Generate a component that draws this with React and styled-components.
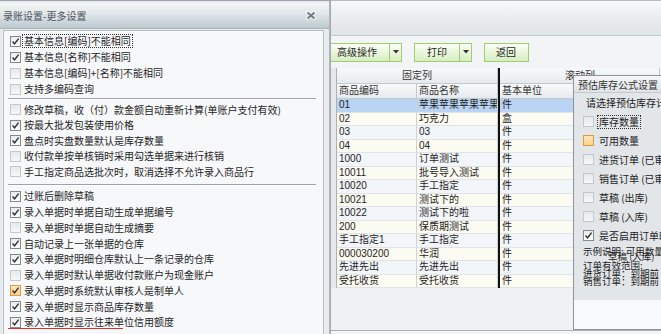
import styled, { createGlobalStyle } from "styled-components";

const GlobalStyle = createGlobalStyle`
  html, body { margin: 0; padding: 0; }
  body {
    font-family: "Liberation Sans", "Noto Sans CJK SC", sans-serif;
    font-size: 10px;
    color: #222;
    background: #dfe3e6;
  }
`;

const Desktop = styled.div`
  position: relative;
  width: 661px;
  height: 334px;
  overflow: hidden;
  display: flex;
  background: #dfe3e6;
`;

/* ---------- left dialog ---------- */

const SettingsDialog = styled.div`
  width: 330px;
  flex: none;
  box-sizing: border-box;
  display: flex;
  flex-direction: column;
  background: #e8ecee;
  border-top: 1px solid #9ba4aa;
  border-right: 1px solid #b0b7bc;
`;

const TitleBar = styled.div`
  height: 25px;
  margin-top: 2px;
  flex: none;
  display: flex;
  align-items: center;
  justify-content: space-between;
  padding: 0 13px 0 3px;
  background: linear-gradient(#f4f6f7, #e2e8eb 40%, #bccad0);
  border-bottom: 1px solid #a9b6bc;
  color: #50565a;
  font-family: "Noto Sans CJK SC", sans-serif;
`;

const Panel = styled.div`
  flex: 1;
  margin: 1px 5px 0 3px;
  padding-top: 2px;
  background: #f7f8fa;
  border: 1px solid #b7bfc5;
  border-bottom: none;
`;

const Group = styled.div`
  display: flex;
  flex-direction: column;
`;

const Row = styled.div`
  position: relative;
  height: ${(p) => p.$h}px;
  display: flex;
  align-items: center;
  gap: 2px;
  padding-left: 6px;
  white-space: nowrap;
  font-family: "Noto Sans CJK SC", sans-serif;
  color: #1e1e1e;
`;

const Label = styled.span`
  line-height: 12px;
  padding: 0 1px;
  outline: ${(p) => (p.$focus ? "1px dotted #333" : "none")};
`;

const Separator = styled.div`
  height: 0;
  margin: ${(p) => p.$m};
  margin-left: 4px;
  margin-right: 7px;
  border-top: 1px solid #9ea3a7;
  border-bottom: 1px solid #ffffff;
`;

const RedMark = styled.span`
  position: absolute;
  left: 4px;
  width: 115px;
  bottom: 1px;
  height: 1px;
  background: #e0302e;
`;

const BoxShell = styled.span`
  width: 11px;
  height: 11px;
  flex: none;
  box-sizing: border-box;
  display: inline-flex;
  align-items: center;
  justify-content: center;
  border: 1px solid ${(p) => (p.$hot ? "#e39a3c" : p.$checked ? "#808a91" : "#c3c8cc")};
  background: ${(p) =>
    p.$hot
      ? "linear-gradient(#fde7bd, #f9d08c)"
      : p.$checked
      ? "linear-gradient(#e9ecee, #ffffff)"
      : "linear-gradient(#e6e8ea, #f6f7f8)"};
`;

function CheckBox({ checked, hot }) {
  return (
    <BoxShell $checked={checked} $hot={hot}>
      {checked && (
        <svg width="9" height="9" viewBox="0 0 9 9">
          <path d="M1.5 4.5 L3.6 6.8 L7.6 1.6" fill="none" stroke="#333" strokeWidth="1.4" />
        </svg>
      )}
    </BoxShell>
  );
}

function CloseIcon() {
  return (
    <svg width="10" height="9" viewBox="0 0 10 9">
      <path d="M1.5 1.5 L8.5 7.5 M8.5 1.5 L1.5 7.5" stroke="#f4f6f7" strokeWidth="3.4" strokeLinecap="round" />
      <path d="M1.5 1.5 L8.5 7.5 M8.5 1.5 L1.5 7.5" stroke="#6f7a80" strokeWidth="1.8" />
    </svg>
  );
}

const groups = [
  {
    h: 16,
    sep: "1px 0 2px",
    items: [
      ["基本信息[编码]不能相同", true, false, true],
      ["基本信息[名称]不能相同", true],
      ["基本信息[编码]+[名称]不能相同", false],
      ["支持多编码查询", false],
    ],
  },
  {
    h: 15.5,
    sep: "4px 0 3px",
    items: [
      ["修改草稿，收（付）款金额自动重新计算(单账户支付有效)", false],
      ["按最大批发包装使用价格", true],
      ["盘点时实盘数量默认是库存数量", true],
      ["收付款单按单核销时采用勾选单据来进行核销", false],
      ["手工指定商品选批次时，取消选择不允许录入商品行", false],
    ],
  },
  {
    h: 15.75,
    items: [
      ["过账后删除草稿", true],
      ["录入单据时单据自动生成单据编号", true],
      ["录入单据时单据自动生成摘要", false],
      ["自动记录上一张单据的仓库", true],
      ["录入单据时明细仓库默认上一条记录的仓库", true],
      ["录入单据时默认单据收付款账户为现金账户", false],
      ["录入单据时系统默认审核人是制单人", true, true],
      ["录入单据时显示商品库存数量", true],
      ["录入单据时显示往来单位信用额度", true, false, false, true],
    ],
  },
];

/* ---------- main window ---------- */

const MainWindow = styled.div`
  flex: 1;
  min-width: 0;
  display: flex;
  flex-direction: column;
  background: #f2f4f5;
  border-left: 1px solid #a3abb1;
  overflow: hidden;
`;

const TopBand = styled.div`
  height: 34px;
  flex: none;
  border-top: 1px solid #b7bec3;
  border-bottom: 1px solid #c3cbd0;
  background: linear-gradient(#f8f9fa, #eef1f3 30%, #dfe4e7);
`;

const Toolbar = styled.div`
  height: 32px;
  flex: none;
  display: flex;
  align-items: center;
  gap: 12px;
  font-family: "Noto Sans CJK SC", sans-serif;
`;

const GreenButton = styled.div`
  height: 19px;
  box-sizing: border-box;
  display: flex;
  align-items: stretch;
  margin-left: ${(p) => p.$shift || 0}px;
  border: 1px solid #9fd070;
  background: linear-gradient(#fbfef7, #e9f6dc 50%, #d6edc0);
  color: #1f1f1f;
`;

const ButtonText = styled.span`
  display: flex;
  align-items: center;
  padding: 0 ${(p) => p.$pr}px 0 ${(p) => p.$pl}px;
  line-height: 12px;
`;

const ArrowPart = styled.span`
  width: 11px;
  display: flex;
  align-items: center;
  justify-content: center;
  border-left: 1px solid #9fd070;
`;

const Arrow = () => (
  <svg width="6" height="4" viewBox="0 0 6 4">
    <path d="M0 0 H6 L3 3.5 Z" fill="#333" />
  </svg>
);

const Grid = styled.div`
  flex: 1;
  display: flex;
  flex-direction: column;
  margin-bottom: 3px;
  background: #eff1f3;
  border-bottom: 1px solid #a9b1b7;
`;

const GridRow = styled.div`
  height: ${(p) => p.$h}px;
  flex: none;
  display: flex;
  background: ${(p) => p.$bg};
`;

const RowHead = styled.div`
  width: 5px;
  flex: none;
  background: #e4e8eb;
  border-right: 1px solid #aab2b8;
`;

const Cell = styled.div`
  width: ${(p) => p.$w}px;
  flex: none;
  box-sizing: border-box;
  display: flex;
  align-items: center;
  justify-content: ${(p) => (p.$center ? "center" : "flex-start")};
  padding-left: ${(p) => (p.$center ? 0 : p.$pad ?? 2)}px;
  border-right: 1px solid ${(p) => (p.$head ? "#c3c9ce" : "#cdd2d6")};
  border-bottom: 1px solid ${(p) => (p.$head ? "#c3c9ce" : "#e1e4e7")};
  background: ${(p) => (p.$head ? "linear-gradient(#f8f9fa, #e7eaed)" : "transparent")};
  color: ${(p) => (p.$head ? "#333" : "#1e1e1e")};
  white-space: nowrap;
  overflow: hidden;
  line-height: 12px;
`;

const Divider = styled.div`
  width: 2px;
  flex: none;
  background: #111;
`;

const items = [
  ["01", "苹果苹果苹果苹果", "件"],
  ["02", "巧克力", "盒"],
  ["03", "03", "件"],
  ["04", "04", "件"],
  ["1000", "订单测试", "件"],
  ["10011", "批号导入测试", "件"],
  ["10020", "手工指定", "件"],
  ["10021", "测试下的", "件"],
  ["10022", "测试下的啦", "件"],
  ["200", "保质期测试", "件"],
  ["手工指定1", "手工指定", "件"],
  ["000030200", "华润", "件"],
  ["先进先出", "先进先出", "件"],
  ["受托收货", "受托收货", "件"],
];

/* ---------- estimate dialog (floating window) ---------- */

const EstimateDialog = styled.div`
  position: absolute;
  left: 573px;
  top: 75px;
  width: 110px;
  height: 255px;
  box-sizing: border-box;
  display: flex;
  flex-direction: column;
  border: 1px solid #8c959b;
  background: #f8f9fa;
  font-family: "Noto Sans CJK SC", sans-serif;
  white-space: nowrap;
  overflow: hidden;
`;

const SmallTitle = styled.div`
  height: 16px;
  flex: none;
  display: flex;
  align-items: center;
  padding-left: 4px;
  background: linear-gradient(#f5f6f7, #dfe3e6);
  border-bottom: 1px solid #c2c9ce;
  color: #333;
`;

const EstimateBody = styled.div`
  height: 204px;
  flex: none;
  padding: 3px 0 0 9px;
  background: #e3e6e9;
`;

const Prompt = styled.div`
  height: 14px;
  line-height: 14px;
  margin: 0 0 2px 3px;
`;

const OptRow = styled.div`
  height: 19px;
  display: flex;
  align-items: center;
  gap: 4px;
`;

const Explain = styled.div`
  margin-top: 2px;
  line-height: 8px;
  font-size: 9.5px;
  color: #222;
`;

const ExplainLine = styled.div`
  height: 8px;
  margin-top: ${(p) => p.$mt || 0}px;
  padding-left: ${(p) => p.$indent || 0}px;
`;

const options = [
  ["库存数量", false, false, true],
  ["可用数量", false, true],
  ["进货订单 (已审核)", false],
  ["销售订单 (已审核)", false],
  ["草稿 (出库)", false],
  ["草稿 (入库)", false],
  ["是否启用订单时效", true],
];

export default function App() {
  return (
    <>
      <GlobalStyle />
      <Desktop>
        <SettingsDialog>
          <TitleBar>
            <span>录账设置-更多设置</span>
            <CloseIcon />
          </TitleBar>
          <Panel>
            {groups.map((g, gi) => (
              <div key={gi}>
                <Group>
                  {g.items.map(([text, checked, hot, focus, mark]) => (
                    <Row key={text} $h={g.h}>
                      <CheckBox checked={checked} hot={hot} />
                      <Label $focus={focus}>{text}</Label>
                      {mark && <RedMark />}
                    </Row>
                  ))}
                </Group>
                {g.sep && <Separator $m={g.sep} />}
              </div>
            ))}
          </Panel>
        </SettingsDialog>

        <MainWindow>
          <TopBand />
          <Toolbar>
            <GreenButton $shift={-3}>
              <ButtonText $pl={8} $pr={12}>高级操作</ButtonText>
              <ArrowPart><Arrow /></ArrowPart>
            </GreenButton>
            <GreenButton>
              <ButtonText $pl={12} $pr={12}>打印</ButtonText>
              <ArrowPart><Arrow /></ArrowPart>
            </GreenButton>
            <GreenButton>
              <ButtonText $pl={11} $pr={12}>返回</ButtonText>
            </GreenButton>
          </Toolbar>
          <Grid>
            <GridRow $h={16} $bg="#eef0f2">
              <RowHead />
              <Cell $w={161} $head $center>固定列</Cell>
              <Divider />
              <Cell $w={160} $head $pad={65}>滚动列</Cell>
            </GridRow>
            <GridRow $h={15} $bg="#eef0f2">
              <RowHead />
              <Cell $w={80} $head>商品编码</Cell>
              <Cell $w={81} $head>商品名称</Cell>
              <Divider />
              <Cell $w={80} $head>基本单位</Cell>
              <Cell $w={80} $head></Cell>
            </GridRow>
            {items.map(([code, name, unit], i) => (
              <GridRow
                key={code}
                $h={13.5}
                $bg={i === 0 ? "#b8d3f3" : i % 2 ? "#fcfbf1" : "#f2f5f9"}
              >
                <RowHead />
                <Cell $w={80}>{code}</Cell>
                <Cell $w={81}>{name}</Cell>
                <Divider />
                <Cell $w={80}>{unit}</Cell>
                <Cell $w={80}></Cell>
              </GridRow>
            ))}
          </Grid>
        </MainWindow>

        <EstimateDialog>
          <SmallTitle>预估库存公式设置</SmallTitle>
          <EstimateBody>
            <Prompt>请选择预估库存计算方式:</Prompt>
            {options.map(([text, checked, hot, focus]) => (
              <OptRow key={text}>
                <CheckBox checked={checked} hot={hot} />
                <Label $focus={focus}>{text}</Label>
              </OptRow>
            ))}
            <Explain>
              <ExplainLine>示例说明: 可用数量=库存数量</ExplainLine>
              <ExplainLine $mt={-3} $indent={25}>草稿 (入库)</ExplainLine>
              <ExplainLine $mt={1}>订单有效范围:</ExplainLine>
              <ExplainLine>进货订单：到期前</ExplainLine>
              <ExplainLine>销售订单：到期前</ExplainLine>
            </Explain>
          </EstimateBody>
        </EstimateDialog>
      </Desktop>
    </>
  );
}
